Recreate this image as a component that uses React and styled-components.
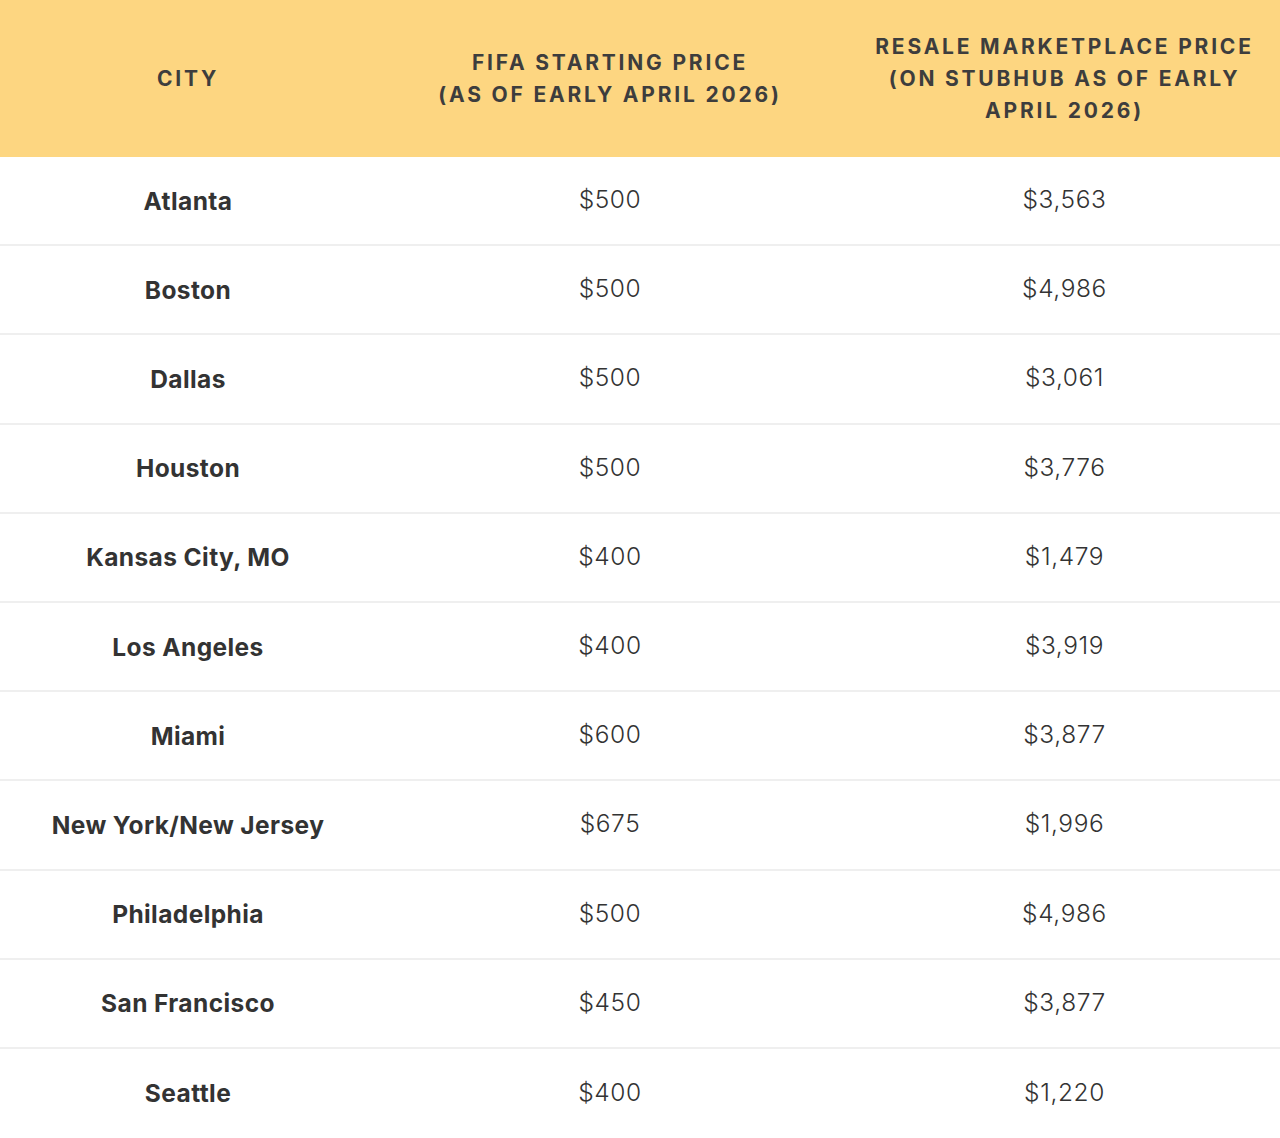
import React from "react";
import styled, { createGlobalStyle } from "styled-components";

const Global = createGlobalStyle`
  html, body { margin: 0; padding: 0; background: #ffffff; }
  body { font-family: "Inter", "Liberation Sans", sans-serif; color: #333333; }
`;

const Table = styled.div`
  width: 1280px;
  display: grid;
  grid-template-columns: 376px 468px 436px;
`;

const HeadCell = styled.div`
  background: #fdd681;
  height: 157px;
  display: flex;
  align-items: center;
  justify-content: center;
  text-align: center;
  padding: ${(p) => (p.$wide ? "0 14px 0 19px" : "0 16px")};
  box-sizing: border-box;
  font-family: "Inter", "Liberation Sans", sans-serif;
  font-weight: 700;
  font-size: 21px;
  line-height: 32px;
  letter-spacing: 2.8px;
  text-transform: uppercase;
  color: #3d3d3d;
`;

const Cell = styled.div`
  height: 89.2px;
  box-sizing: border-box;
  display: flex;
  align-items: center;
  justify-content: center;
  text-align: center;
  padding: ${(p) =>
    p.$city ? "0" : p.$wide ? "0 0 3px 5px" : "0 0 3px 0"};
  border-bottom: ${(p) => (p.$last ? "none" : "2px solid #efefef")};
  color: #333333;
  font-family: "Inter", "Liberation Sans", sans-serif;
  font-size: 24.5px;
  font-weight: ${(p) => (p.$city ? 700 : 300)};
  letter-spacing: ${(p) => (p.$city ? "0.4px" : "0.6px")};
`;

const rows = [
  ["Atlanta", "$500", "$3,563"],
  ["Boston", "$500", "$4,986"],
  ["Dallas", "$500", "$3,061"],
  ["Houston", "$500", "$3,776"],
  ["Kansas City, MO", "$400", "$1,479"],
  ["Los Angeles", "$400", "$3,919"],
  ["Miami", "$600", "$3,877"],
  ["New York/New Jersey", "$675", "$1,996"],
  ["Philadelphia", "$500", "$4,986"],
  ["San Francisco", "$450", "$3,877"],
  ["Seattle", "$400", "$1,220"],
];

export default function App() {
  return (
    <>
      <Global />
      <Table>
        <HeadCell>City</HeadCell>
        <HeadCell>
          FIFA starting price
          <br />
          (as of early April 2026)
        </HeadCell>
        <HeadCell $wide>
          Resale marketplace price (on StubHub as of early April 2026)
        </HeadCell>
        {rows.map((r, i) => {
          const last = i === rows.length - 1;
          return (
            <React.Fragment key={r[0]}>
              <Cell $city $last={last}>{r[0]}</Cell>
              <Cell $last={last}>{r[1]}</Cell>
              <Cell $wide $last={last}>{r[2]}</Cell>
            </React.Fragment>
          );
        })}
      </Table>
    </>
  );
}
